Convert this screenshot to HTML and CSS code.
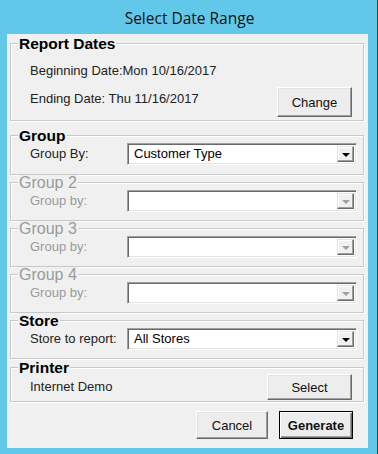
FILE: index.html
```html
<!DOCTYPE html>
<html>
<head>
<meta charset="utf-8">
<link rel="stylesheet" href="styles.css">
</head>
<body>
<div class="window">
  <div class="titlebar">Select Date Range</div>
  <div class="panel">
    <div class="group g-report">
      <span class="legend">Report Dates</span>
      <div class="text-row first">Beginning Date:Mon 10/16/2017</div>
      <div class="date-row">
        <span class="text-row">Ending Date: Thu 11/16/2017</span>
        <button class="btn btn-change">Change</button>
      </div>
    </div>

    <div class="group g-main">
      <span class="legend">Group</span>
      <div class="field-row">
        <span class="label">Group By:</span>
        <div class="combo"><span class="value">Customer Type</span><span class="drop"><i class="arrow"></i></span></div>
      </div>
    </div>

    <div class="group g-sub disabled">
      <span class="legend">Group 2</span>
      <div class="field-row">
        <span class="label">Group by:</span>
        <div class="combo"><span class="value"></span><span class="drop"><i class="arrow"></i></span></div>
      </div>
    </div>

    <div class="group g-sub disabled">
      <span class="legend">Group 3</span>
      <div class="field-row">
        <span class="label">Group by:</span>
        <div class="combo"><span class="value"></span><span class="drop"><i class="arrow"></i></span></div>
      </div>
    </div>

    <div class="group g-sub disabled">
      <span class="legend">Group 4</span>
      <div class="field-row">
        <span class="label">Group by:</span>
        <div class="combo"><span class="value"></span><span class="drop"><i class="arrow"></i></span></div>
      </div>
    </div>

    <div class="group g-sub">
      <span class="legend">Store</span>
      <div class="field-row">
        <span class="label">Store to report:</span>
        <div class="combo"><span class="value">All Stores</span><span class="drop"><i class="arrow"></i></span></div>
      </div>
    </div>

    <div class="group g-printer">
      <span class="legend">Printer</span>
      <div class="printer-row">
        <span class="label">Internet Demo</span>
        <button class="btn btn-select">Select</button>
      </div>
    </div>

    <div class="actions">
      <button class="btn btn-cancel">Cancel</button>
      <button class="btn btn-generate">Generate</button>
    </div>
  </div>
</div>
</body>
</html>
```
FILE: styles.css
```css
* { box-sizing: border-box; }
html, body { margin: 0; padding: 0; background: #ffffff; }
body {
  font-family: "Liberation Sans", Arial, sans-serif;
  font-size: 13px;
  color: #222;
}
.window {
  width: 378px;
  height: 454px;
  background: #62c8ea;
  border-right: 1px solid #3c3c3c;
  display: flex;
  flex-direction: column;
}
.titlebar {
  height: 34px;
  line-height: 36px;
  text-align: center;
  font-family: "Open Sans", "Noto Sans", sans-serif;
  font-size: 15.5px;
  color: #111;
  padding-left: 2px;
}
.panel {
  margin-left: 7px;
  width: 361px;
  height: 414px;
  background: #f0f0f0;
  padding: 9px 4px 0 3px;
  display: flex;
  flex-direction: column;
}
.group {
  border: 1px solid #c8c8c8;
  box-shadow: inset 1px 1px 0 #fff, 1px 1px 0 #fff;
  padding: 0 0 0 19px;
  display: flex;
  flex-direction: column;
  align-items: flex-start;
}
.legend {
  display: inline-block;
  margin: -8px 0 0 -12px;
  padding: 0 1px;
  height: 16px;
  line-height: 16px;
  background: #f0f0f0;
  font-weight: bold;
  font-size: 15.5px;
  color: #000;
}
.disabled .legend,
.disabled .label { color: #9a9a9a; }
.disabled .legend { font-weight: normal; font-size: 16px; }

.g-report { height: 78px; }
.text-row { line-height: 16px; display: block; }
.text-row.first { margin-top: 11px; }
.date-row {
  margin-top: 8px;
  width: 100%;
  display: flex;
  justify-content: space-between;
  align-items: flex-start;
  padding-right: 11px;
}
.date-row .text-row { margin-top: 4px; }
.btn-change { width: 75px; height: 30px; }

.g-main { margin-top: 14px; height: 40px; }
.g-sub { margin-top: 7px; height: 39px; }
.field-row {
  display: flex;
  align-items: center;
  height: 22px;
  margin-top: -1px;
}
.label { width: 97px; line-height: 16px; }
.combo {
  width: 230px;
  height: 22px;
  background: #fff;
  border: 1px solid;
  border-color: #a0a0a0 #ffffff #ffffff #a0a0a0;
  box-shadow: inset 1px 1px 0 #696969, inset -1px -1px 0 #e3e3e3;
  display: flex;
  align-items: center;
  padding: 2px;
}
.value { flex: 1; padding-left: 4px; color: #000; line-height: 16px; }
.drop {
  width: 17px;
  height: 16px;
  background: #f0f0f0;
  border: 1px solid;
  border-color: #e3e3e3 #696969 #696969 #e3e3e3;
  box-shadow: inset -1px -1px 0 #a0a0a0, inset 1px 1px 0 #fff;
  display: flex;
  align-items: center;
  justify-content: center;
}
.arrow {
  width: 0;
  height: 0;
  border-left: 4px solid transparent;
  border-right: 4px solid transparent;
  border-top: 4px solid #000;
  margin-top: 1px;
}
.disabled .arrow { border-top-color: #a0a0a0; }

.g-printer { margin-top: 8px; height: 35px; }
.printer-row {
  width: 100%;
  display: flex;
  justify-content: space-between;
  align-items: center;
  margin-top: -2px;
  padding-right: 11px;
}
.printer-row .label { width: auto; color: #222; }
.btn-select { width: 85px; height: 26px; }

.btn {
  font-family: "Liberation Sans", Arial, sans-serif;
  font-size: 13px;
  color: #111;
  background: #ededed;
  border: 1px solid;
  border-color: #ffffff #696969 #696969 #ffffff;
  box-shadow: inset -1px -1px 0 #a0a0a0, inset 1px 1px 0 #e3e3e3;
  padding: 0;
}
.actions {
  display: flex;
  justify-content: flex-end;
  gap: 11px;
  margin-top: 9px;
  padding-right: 11px;
}
.btn-cancel { width: 72px; height: 28px; }
.btn-generate {
  width: 74px;
  height: 28px;
  font-weight: bold;
  border: 1px solid #000;
  box-shadow: inset 1px 1px 0 #fff, inset -1px -1px 0 #696969, inset -2px -2px 0 #a0a0a0;
}
```
